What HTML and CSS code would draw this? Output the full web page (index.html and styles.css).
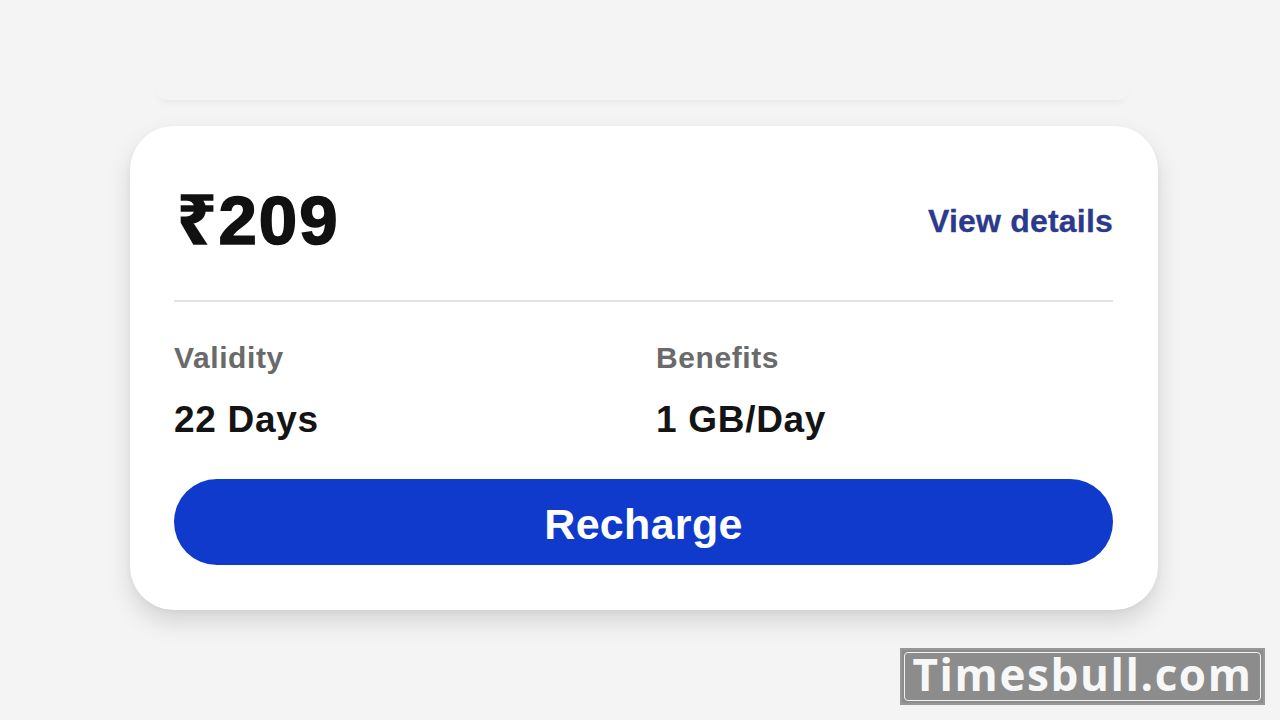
FILE: index.html
```html
<!DOCTYPE html>
<html lang="en">
<head>
<meta charset="utf-8">
<title>Plan ₹209</title>
<link rel="stylesheet" href="styles.css">
</head>
<body>
<div class="page">
  <div class="prev-card"></div>
  <div class="card">
    <div class="card-head">
      <div class="price">₹209</div>
      <a class="details" href="#">View details</a>
    </div>
    <div class="divider"></div>
    <div class="info">
      <div class="info-col">
        <div class="label">Validity</div>
        <div class="value">22 Days</div>
      </div>
      <div class="info-col">
        <div class="label">Benefits</div>
        <div class="value">1 GB/Day</div>
      </div>
    </div>
    <button class="recharge">Recharge</button>
  </div>
</div>
<div class="watermark"><span>Timesbull.com</span></div>
</body>
</html>
```
FILE: styles.css
```css
html, body {
  margin: 0;
  padding: 0;
}
body {
  width: 1280px;
  height: 720px;
  overflow: hidden;
  background: #f4f4f4;
  font-family: "Liberation Sans", Arial, "Noto Sans", sans-serif;
  position: relative;
}
.page {
  padding-left: 130px;
  width: 1028px;
}
.prev-card {
  height: 100px;
  margin-left: 25px;
  width: 975px;
  background: #f4f4f4;
  border-radius: 0 0 12px 12px;
  box-shadow: 0 6px 9px -6px rgba(0, 0, 0, 0.09);
  margin-bottom: 26px;
}
.card {
  background: #ffffff;
  border-radius: 44px;
  padding: 60px 45px 45px 44px;
  box-shadow: 0 12px 24px rgba(0, 0, 0, 0.13), 0 2px 6px rgba(0, 0, 0, 0.04);
}
.card-head {
  display: flex;
  justify-content: space-between;
  align-items: center;
  height: 68px;
}
.price {
  font-size: 69px;
  line-height: 1;
  font-weight: 700;
  color: #111111;
  font-family: "Liberation Sans", "Noto Sans", "DejaVu Sans", sans-serif;
  letter-spacing: 2px;
  -webkit-text-stroke: 1.6px #111111;
  padding-left: 3px;
}
.details {
  font-size: 32px;
  line-height: 1;
  font-weight: 700;
  color: #2a3a8c;
  text-decoration: none;
  margin-top: 2px;
  letter-spacing: 0.2px;
  -webkit-text-stroke: 0.3px #2a3a8c;
}
.divider {
  height: 2px;
  background: #e3e3e3;
  margin-top: 46px;
}
.info {
  display: grid;
  grid-template-columns: 482px 1fr;
  margin-top: 39px;
}
.label {
  font-size: 30px;
  line-height: 34px;
  font-weight: 700;
  color: #6a6a6a;
  letter-spacing: 0.6px;
}
.value {
  font-size: 37px;
  line-height: 42px;
  font-weight: 700;
  color: #141414;
  margin-top: 24px;
  letter-spacing: 0.7px;
}
.recharge {
  display: block;
  width: 100%;
  height: 86px;
  margin-top: 38px;
  border: none;
  border-radius: 43px;
  background: #0f3acb;
  color: #ffffff;
  font-family: "Liberation Sans", Arial, sans-serif;
  font-size: 43px;
  font-weight: 700;
  padding: 4px 0 0 0;
  line-height: 1;
  letter-spacing: 0.3px;
  cursor: pointer;
}
.watermark {
  position: absolute;
  left: 900px;
  top: 648px;
  width: 365px;
  height: 57px;
  box-sizing: border-box;
  border: 2px solid #979797;
  background: #8c8c8c;
  padding: 2px;
}
.watermark span {
  display: flex;
  align-items: center;
  justify-content: center;
  height: 100%;
  box-sizing: border-box;
  border: 1px solid #f2f2f2;
  border-radius: 4px;
  color: #f7f7f7;
  font-family: "Open Sans", sans-serif;
  font-weight: 700;
  font-size: 44px;
  letter-spacing: 1.6px;
  line-height: 1;
  padding-bottom: 5px;
  white-space: nowrap;
}
```
